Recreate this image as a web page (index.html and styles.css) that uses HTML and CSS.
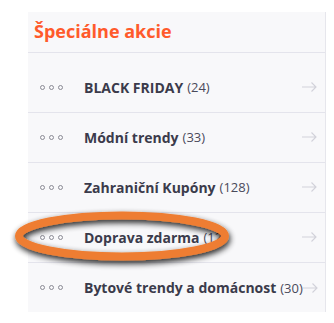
FILE: index.html
```html
<!DOCTYPE html>
<html lang="sk">
<head>
<meta charset="utf-8">
<link rel="stylesheet" href="styles.css">
</head>
<body>
<div class="panel">
  <h2 class="title">Špeciálne akcie</h2>
  <ul class="list">
    <li class="row"><span class="dots"><i></i><i></i><i></i></span><span class="name">BLACK FRIDAY</span><span class="count">(24)</span><span class="arrow"><svg width="15" height="10" viewBox="0 0 15 10"><path d="M0 5H14M9.5 0.5L14 5L9.5 9.5" fill="none" stroke="#d2d2da" stroke-width="1.1"/></svg></span></li>
    <li class="row"><span class="dots"><i></i><i></i><i></i></span><span class="name">Módní trendy</span><span class="count">(33)</span><span class="arrow"><svg width="15" height="10" viewBox="0 0 15 10"><path d="M0 5H14M9.5 0.5L14 5L9.5 9.5" fill="none" stroke="#d2d2da" stroke-width="1.1"/></svg></span></li>
    <li class="row"><span class="dots"><i></i><i></i><i></i></span><span class="name">Zahraniční Kupóny</span><span class="count">(128)</span><span class="arrow"><svg width="15" height="10" viewBox="0 0 15 10"><path d="M0 5H14M9.5 0.5L14 5L9.5 9.5" fill="none" stroke="#d2d2da" stroke-width="1.1"/></svg></span></li>
    <li class="row"><span class="dots"><i></i><i></i><i></i></span><span class="name">Doprava zdarma</span><span class="count">(12)</span><span class="arrow"><svg width="15" height="10" viewBox="0 0 15 10"><path d="M0 5H14M9.5 0.5L14 5L9.5 9.5" fill="none" stroke="#d2d2da" stroke-width="1.1"/></svg></span></li>
    <li class="row"><span class="dots"><i></i><i></i><i></i></span><span class="name">Bytové trendy a domácnost</span><span class="count">(30)</span><span class="arrow"><svg width="15" height="10" viewBox="0 0 15 10"><path d="M0 5H14M9.5 0.5L14 5L9.5 9.5" fill="none" stroke="#d2d2da" stroke-width="1.1"/></svg></span></li>
  </ul>
  <svg class="circle" width="250" height="76" viewBox="0 0 250 76">
    <defs>
      <filter id="sh" x="-20%" y="-40%" width="140%" height="180%">
        <feGaussianBlur in="SourceAlpha" stdDeviation="3"/>
        <feOffset dx="1" dy="3"/>
        <feComponentTransfer><feFuncA type="linear" slope="0.9"/></feComponentTransfer>
        <feMerge><feMergeNode/><feMergeNode in="SourceGraphic"/></feMerge>
      </filter>
    </defs>
    <ellipse cx="127" cy="36" rx="103" ry="20.5" fill="none" stroke="#ee7d30" stroke-width="8" filter="url(#sh)"/>
  </svg>
</div>
</body>
</html>
```
FILE: styles.css
```css
html, body {
  margin: 0;
  padding: 0;
  background: #ffffff;
}
body {
  font-family: "Open Sans", "Noto Sans", sans-serif;
  width: 334px;
  height: 323px;
  overflow: hidden;
}
.panel {
  position: relative;
  margin: 12px 0 0 28px;
  width: 297px;
  height: 300px;
  background: #f8f8fa;
  border-right: 1px solid #e6e6ec;
}
.title {
  margin: 0;
  height: 41px;
  box-sizing: border-box;
  padding: 6px 0 0 6px;
  font-size: 18px;
  font-weight: 700;
  line-height: 26px;
  color: #ff5a2b;
  border-bottom: 1px solid #e4e4ec;
}
.list {
  list-style: none;
  margin: 0;
  padding: 10px 0 0 0;
}
.row {
  height: 50px;
  box-sizing: border-box;
  display: flex;
  align-items: center;
  border-bottom: 1px solid #e4e4ec;
  padding-left: 12px;
  padding-right: 8px;
  padding-bottom: 1px;
  white-space: nowrap;
}
.row:last-child {
  border-bottom: none;
}
.dots {
  display: flex;
  flex-shrink: 0;
  gap: 4px;
  width: 23px;
  margin-right: 21px;
}
.dots i {
  display: block;
  width: 5px;
  height: 5px;
  box-sizing: border-box;
  border: 1px solid #8a8a94;
  border-radius: 50%;
}
.name {
  font-size: 14px;
  font-weight: 700;
  color: #3b3b4b;
  flex-shrink: 0;
}
.count {
  margin-left: 4px;
  font-size: 13px;
  color: #4a4a5a;
  flex-shrink: 0;
}
.arrow {
  margin-left: auto;
  display: flex;
  flex-shrink: 0;
}
.circle {
  position: absolute;
  left: -33px;
  top: 188px;
  pointer-events: none;
}
```
